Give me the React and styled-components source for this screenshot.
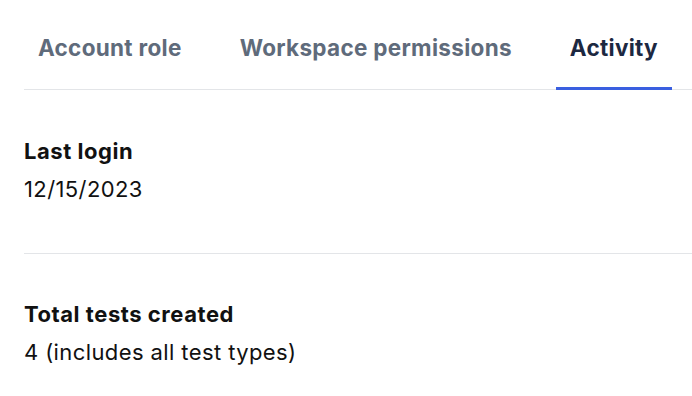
import React, { useState } from "react";
import styled, { createGlobalStyle } from "styled-components";

const Global = createGlobalStyle`
  html, body { margin: 0; padding: 0; background: #ffffff; }
  body { font-family: Inter, "Noto Sans", sans-serif; -webkit-font-smoothing: antialiased; }
`;

const Page = styled.div`
  width: 692px;
  height: 396px;
  padding: 24px 0 0 24px;
  box-sizing: border-box;
  overflow: hidden;
`;

const TabBar = styled.div`
  display: flex;
  gap: 30px;
  border-bottom: 1px solid #e3e5e8;
  height: 66px;
  box-sizing: border-box;
`;

const Tab = styled.button`
  appearance: none;
  background: none;
  border: none;
  margin: 0 0 -1px 0;
  padding: 10px 14px 0;
  height: 66px;
  box-sizing: border-box;
  font-family: inherit;
  font-size: 22.5px;
  line-height: 28px;
  font-weight: 700;
  letter-spacing: 0.3px;
  color: ${(p) => (p.$active ? "#1c2841" : "#5f6b7b")};
  border-bottom: 3px solid ${(p) => (p.$active ? "#3a5fe0" : "transparent")};
  cursor: pointer;
  display: flex;
  align-items: flex-start;
`;

const Section = styled.section`
  padding: ${(p) => p.$pad};
  border-bottom: ${(p) => (p.$divider ? "1px solid #e3e5e8" : "none")};
`;

const Label = styled.div`
  font-size: 22px;
  font-weight: 700;
  letter-spacing: 0.55px;
  color: #111111;
  line-height: 28px;
`;

const Value = styled.div`
  font-size: 22px;
  font-weight: 400;
  letter-spacing: 0.4px;
  color: #111111;
  line-height: 28px;
  margin-top: 10px;
`;

const tabs = ["Account role", "Workspace permissions", "Activity"];

export default function App() {
  const [active, setActive] = useState("Activity");
  return (
    <>
      <Global />
      <Page>
        <TabBar>
          {tabs.map((t) => (
            <Tab key={t} $active={active === t} onClick={() => setActive(t)}>
              {t}
            </Tab>
          ))}
        </TabBar>
        <Section $divider $pad="47px 0 50px">
          <Label>Last login</Label>
          <Value>12/15/2023</Value>
        </Section>
        <Section $pad="46px 0 0">
          <Label>Total tests created</Label>
          <Value>4 (includes all test types)</Value>
        </Section>
      </Page>
    </>
  );
}
